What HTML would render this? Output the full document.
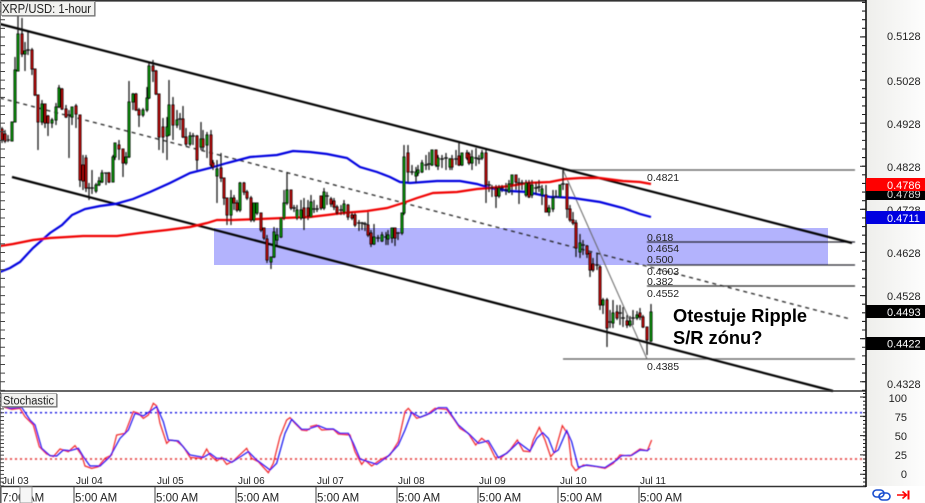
<!DOCTYPE html>
<html><head><meta charset="utf-8"><style>
html,body{margin:0;padding:0;background:#fff}
svg{display:block;font-family:"Liberation Sans",sans-serif}
</style></head><body>
<svg width="925" height="503" viewBox="0 0 925 503" xmlns="http://www.w3.org/2000/svg">
<defs>
<filter id="b" x="-2%" y="-2%" width="104%" height="104%"><feGaussianBlur stdDeviation="0.42"/></filter>
<linearGradient id="g" x1="0" x2="1" y1="0" y2="0"><stop offset="0" stop-color="#eeeeeb"/><stop offset="1" stop-color="#fdfdfd"/></linearGradient>
</defs>
<rect width="925" height="503" fill="#fff"/>
<rect x="866" y="0" width="59" height="486" fill="url(#g)"/>
<rect x="214" y="228" width="614" height="37" fill="#b3b3fd"/>

<g filter="url(#b)">
<!-- fib -->
<g fill="none" stroke="#555" stroke-width="1.3">
<path d="M563 170H855M563 359H855"/>
<path d="M647 286H855" stroke="#222"/>
<path d="M647 242H855M647 265H855" stroke="#223"/>
<path d="M563 170L647 359" stroke="#666" stroke-width="1"/>
</g>
<path d="M0 98L850 319" stroke="#222" stroke-width="1.3" stroke-dasharray="4 4" fill="none"/>
<!-- channels -->
<path d="M0 24L852 243M12 177L833 391" stroke="#000" stroke-width="2.2" fill="none"/>
<!-- MAs -->
<polyline fill="none" stroke="#0000e0" stroke-width="2.2" points="0,272 10,268 20,262 33,248 50,233 62,225 72,215 85,209 100,206 115,204 133,199 150,192 170,183 190,173 210,168 227,163 250,157 277,155 293,151 310,152 327,154 347,158 360,167 377,172 390,177 400,182 410,183 437,181 460,181 477,184 490,188 510,191 527,192 550,197 557,197 573,198 600,202 623,208 640,214 651,217"/>
<polyline fill="none" stroke="#f00000" stroke-width="2.2" points="0,246 13,244 33,240 50,238 67,237 83,236 117,236 140,233 167,230 190,227 207,223 217,220 233,220 260,219 283,218 310,217 327,215 343,213 367,211 387,208 403,203 417,198 433,193 457,192 477,189 490,188 510,186 527,183 550,182 565,179 580,178 600,178 623,181 640,182 651,184"/>
<!-- wicks -->
<path fill="none" stroke="#111" stroke-width="1.2" d="M2 127V143M5 130V143M8 135V142M7 140h3M12 122V141M15 57V122M18 5V71M22 18V57M25 42V71M28 32V55M26 50h4M32 48V75M35 69V96M38 95V150M42 100V125M45 104V128M48 115V136M52 118V128M56 103V125M59 85V108M62 88V110M66 105V118M69 110V158M67 115h4M72 107V125M76 104V128M80 115V187M83 155V190M86 155V192M89 183V200M87 188h4M92 170V194M90 188h4M96 183V193M99 177V186M102 170V183M106 173V185M104 173h4M109 172V183M113 155V182M115 143V160M119 140V160M123 149V177M126 152V165M129 81V158M133 93V110M136 93V111M139 108V127M143 108V117M147 87V112M149 63V99M153 60V82M156 70V95M159 94V150M163 118V153M167 117V160M169 80V136M173 97V140M177 110V128M180 113V130M178 119h4M183 106V138M186 128V146M190 132V146M193 133V145M191 136h4M197 135V170M201 122V150M203 130V150M207 132V158M211 130V168M213 160V170M217 160V203M221 153V182M224 178V205M227 198V225M231 190V225M234 195V210M237 200V212M240 182V212M244 182V195M247 190V200M251 196V222M254 203V222M257 203V215M261 213V232M264 228V240M267 235V263M271 257V269M274 227V258M277 228V245M281 218V238M284 190V220M287 172V205M291 190V210M294 205V212M292 208h4M297 205V220M301 200V220M304 198V230M308 200V220M311 195V217M314 200V213M312 209h4M317 205V212M315 209h4M321 196V210M324 188V210M327 192V205M325 196h4M331 197V207M334 198V210M337 205V215M341 205V215M339 210h4M344 200V215M348 204V220M352 212V220M355 213V227M359 220V231M357 223h4M362 222V230M360 223h4M365 222V231M363 224h4M368 212V237M371 230V247M374 224V245M378 235V242M376 238h4M382 232V242M386 232V245M384 237h4M388 230V245M392 228V243M395 228V246M398 232V240M396 233h4M402 213V235M404 145V215M408 145V183M412 165V175M410 172h4M416 167V183M418 165V176M422 160V173M426 155V170M424 165h4M429 152V170M427 164h4M432 150V166M436 150V167M438 155V170M442 155V168M440 159h4M446 153V170M444 158h4M450 158V170M452 155V170M456 150V165M454 159h4M459 142V166M462 153V166M467 150V160M469 152V165M472 150V170M476 148V166M474 158h4M479 155V164M477 159h4M482 150V160M486 150V203M489 181V192M487 185h4M492 185V197M490 188h4M496 185V208M499 185V198M502 185V192M500 188h4M506 183V195M504 190h4M509 180V193M512 175V195M516 175V190M519 178V204M517 183h4M522 180V190M520 183h4M526 180V197M529 180V198M532 180V198M536 182V195M534 188h4M539 180V192M537 187h4M542 185V205M546 185V212M549 205V216M553 190V212M556 190V197M554 197h4M560 185V197M563 170V190M561 184h4M567 184V218M570 205V222M573 212V225M576 220V257M580 234V258M583 240V255M581 245h4M587 245V258M590 253V277M593 258V272M597 253V270M595 265h4M600 265V310M603 298V314M607 298V347M610 310V328M608 322h4M613 300V328M617 305V320M620 305V325M618 313h4M623 307V327M621 318h4M627 315V328M630 316V327M633 310V325M631 318h4M637 311V320M640 308V320M643 315V328M647 327V355M651 304V342"/>
<!-- green bodies -->
<path fill="#0aa00a" stroke="#000" stroke-width="1" d="M11 122h2V141h-2zM14 70h2V122h-2zM17 34h2V71h-2zM24 51h2V54h-2zM41 104h2V122h-2zM51 120h2V123h-2zM55 107h2V120h-2zM58 88h2V107h-2zM71 107h2V117h-2zM95 185h2V191h-2zM98 181h2V185h-2zM101 173h2V182h-2zM112 157h2V182h-2zM114 143h2V157h-2zM125 157h2V163h-2zM128 102h2V157h-2zM132 94h2V102h-2zM142 110h2V115h-2zM146 98h2V110h-2zM148 66h2V98h-2zM166 127h2V136h-2zM168 105h2V135h-2zM176 120h2V125h-2zM189 136h2V144h-2zM200 139h2V147h-2zM206 135h2V145h-2zM216 169h2V176h-2zM230 198h2V215h-2zM239 183h2V210h-2zM253 203h2V220h-2zM256 203h2V213h-2zM270 257h2V262h-2zM273 232h2V257h-2zM276 235h2V240h-2zM280 218h2V237h-2zM283 203h2V218h-2zM286 190h2V203h-2zM296 210h2V218h-2zM300 210h2V218h-2zM310 202h2V217h-2zM323 192h2V208h-2zM343 204h2V212h-2zM373 237h2V244h-2zM381 235h2V241h-2zM387 235h2V239h-2zM391 228h2V238h-2zM401 213h2V233h-2zM403 157h2V213h-2zM415 172h2V176h-2zM417 170h2V173h-2zM421 163h2V172h-2zM431 150h2V165h-2zM437 158h2V166h-2zM449 159h2V167h-2zM461 153h2V165h-2zM471 157h2V163h-2zM481 153h2V158h-2zM498 188h2V196h-2zM508 184h2V192h-2zM511 175h2V184h-2zM525 183h2V195h-2zM531 185h2V195h-2zM541 189h2V195h-2zM548 208h2V212h-2zM552 198h2V209h-2zM559 185h2V197h-2zM579 243h2V252h-2zM602 300h2V305h-2zM612 313h2V323h-2zM629 321h2V325h-2zM636 315h2V318h-2zM650 312h2V341h-2z"/>
<!-- red bodies -->
<path fill="#cc0a0a" stroke="#000" stroke-width="1" d="M1 129h2V140h-2zM4 134h2V141h-2zM21 34h2V54h-2zM31 50h2V69h-2zM34 69h2V95h-2zM37 95h2V122h-2zM44 104h2V123h-2zM47 116h2V123h-2zM61 89h2V109h-2zM65 109h2V117h-2zM75 106h2V114h-2zM79 115h2V180h-2zM82 165h2V181h-2zM85 158h2V188h-2zM108 173h2V182h-2zM118 145h2V149h-2zM122 149h2V163h-2zM135 94h2V110h-2zM138 110h2V115h-2zM152 66h2V71h-2zM155 71h2V94h-2zM158 94h2V137h-2zM162 127h2V137h-2zM172 105h2V125h-2zM182 119h2V137h-2zM185 137h2V144h-2zM196 136h2V160h-2zM202 139h2V147h-2zM210 135h2V165h-2zM212 163h2V167h-2zM220 168h2V178h-2zM223 178h2V198h-2zM226 198h2V215h-2zM233 198h2V203h-2zM236 203h2V210h-2zM243 183h2V192h-2zM246 192h2V198h-2zM250 198h2V220h-2zM260 213h2V230h-2zM263 228h2V238h-2zM266 239h2V260h-2zM290 190h2V208h-2zM303 208h2V218h-2zM307 208h2V216h-2zM320 196h2V208h-2zM330 199h2V204h-2zM333 201h2V207h-2zM336 207h2V213h-2zM347 205h2V217h-2zM351 215h2V218h-2zM354 215h2V225h-2zM367 225h2V235h-2zM370 233h2V244h-2zM394 228h2V238h-2zM407 153h2V172h-2zM435 150h2V165h-2zM451 159h2V167h-2zM458 156h2V165h-2zM466 153h2V158h-2zM468 154h2V163h-2zM485 153h2V185h-2zM495 188h2V196h-2zM515 175h2V182h-2zM528 183h2V197h-2zM545 195h2V212h-2zM566 184h2V209h-2zM569 209h2V220h-2zM572 220h2V223h-2zM575 223h2V248h-2zM586 246h2V254h-2zM589 253h2V270h-2zM592 264h2V270h-2zM599 267h2V305h-2zM606 300h2V328h-2zM616 312h2V318h-2zM626 321h2V325h-2zM639 313h2V317h-2zM642 317h2V327h-2zM646 327h2V340h-2z"/>
<!-- stochastic -->
<path d="M0 412.7H866" stroke="#0000e0" stroke-width="1.4" stroke-dasharray="2 3"/>
<path d="M0 459H866" stroke="#e02020" stroke-width="1.4" stroke-dasharray="2 3"/>
<g transform="translate(0,380) scale(.33333)" fill="none" stroke-width="3.6">
<polyline stroke="#f02020" points="0,70 15,82 35,88 60,85 75,110 100,135 118,200 140,222 160,230 180,207 205,215 225,197 245,225 255,258 275,265 295,260 315,235 335,225 350,165 375,160 400,95 415,100 430,115 445,105 460,70 470,78 480,130 500,190 510,180 530,183 550,200 570,232 605,235 620,207 630,225 650,243 665,232 680,253 700,243 740,205 755,235 775,245 805,278 820,250 840,170 860,120 870,113 885,130 905,150 920,152 930,145"/>
<polyline stroke="#1010f0" points="0,72 30,85 65,82 90,120 105,135 125,205 150,227 170,228 190,210 210,212 235,205 250,230 270,258 300,258 330,230 360,175 385,150 405,100 430,108 470,80 490,125 505,180 535,183 570,225 610,232 630,220 650,235 670,235 695,247 745,215 770,240 810,270 830,250 855,160 875,118 905,148 930,148"/>
</g>
<g transform="translate(310,380) scale(.33333)" fill="none" stroke-width="3.6">
<polyline stroke="#f02020" points="0,140 20,135 35,150 70,148 85,162 120,165 135,215 155,253 165,240 185,258 210,240 240,225 265,185 285,95 295,85 320,115 350,105 375,85 410,88 430,115 450,145 475,160 497,195 515,175 535,190 555,232 575,232 600,210 622,180 640,213 660,215 670,180 688,142 705,180 722,230 735,215 757,137 775,165 785,255 797,272 820,255 860,260 885,265 910,250 930,225 960,228 990,207 1012,212 1025,180"/>
<polyline stroke="#1010f0" points="0,145 25,137 50,147 70,147 90,160 115,160 130,190 150,237 175,245 200,253 235,228 265,195 285,150 305,97 330,112 360,100 385,83 410,83 445,135 480,165 505,190 535,182 565,233 590,220 625,187 660,213 680,175 698,158 715,175 732,218 745,210 770,152 785,185 805,262 830,255 885,263 920,240 935,227 965,226 990,210 1012,212 1020,205"/>
</g>
</g>

<!-- frame -->
<path d="M0 .8H866M0 391H866M0 486.5H866" stroke="#333" stroke-width="1.6" fill="none"/>
<path d="M866 0V487" stroke="#111" stroke-width="1.6"/>
<path d="M.5 0V503" stroke="#777" stroke-width="1"/>
<!-- ticks -->
<g fill="none" stroke="#222">
<path d="M864 1.9V391" stroke-width="4" stroke-dasharray="1.1 7.52"/>
<path d="M863 36.4V391" stroke-width="6" stroke-dasharray="1.1 42"/>
<path d="M2.5 1V391" stroke-width="5" stroke-dasharray="1 7.62" stroke-dashoffset="-1" stroke="#444"/>
<path d="M864.5 393V486" stroke-width="3" stroke-dasharray="1 2.85"/>
<path d="M863 396.5V486" stroke-width="6" stroke-dasharray="1 18.3"/>
<path d="M2 393V486" stroke-width="4" stroke-dasharray="1 2.85" stroke="#444"/>
</g>
<!-- time separators -->
<path d="M74 487V503M155 487V503M236 487V503M316 487V503M397 487V503M478 487V503M558 487V503M639 487V503M1 487V503" stroke="#444" stroke-width="1"/>

<!-- title boxes -->
<rect x="1.5" y="1.5" width="93" height="14" fill="#f2f2f0" stroke="#aaa"/>
<path d="M95 2V16H2" stroke="#666" fill="none"/>
<text x="2" y="13" font-size="12.5" fill="#222" textLength="89" lengthAdjust="spacingAndGlyphs">XRP/USD: 1-hour</text>
<rect x="1.5" y="393.5" width="55" height="13" fill="#f2f2f0" stroke="#aaa"/>
<path d="M57 394V407H2" stroke="#666" fill="none"/>
<text x="3" y="404.5" font-size="11.5" fill="#222" textLength="51" lengthAdjust="spacingAndGlyphs">Stochastic</text>

<!-- fib labels -->
<g font-size="10.5" fill="#222">
<text x="647" y="181">0.4821</text>
<text x="647" y="241">0.618</text>
<text x="647" y="252">0.4654</text>
<text x="647" y="263">0.500</text>
<text x="647" y="275">0.4603</text>
<text x="647" y="285">0.382</text>
<text x="647" y="297">0.4552</text>
<text x="647" y="370">0.4385</text>
</g>
<text font-size="18.3" font-weight="700" fill="#000"><tspan x="673" y="322">Otestuje Ripple</tspan><tspan x="673" y="344">S/R zónu?</tspan></text>

<!-- right axis -->
<g font-size="11" fill="#222">
<text x="887" y="40">0.5128</text>
<text x="887" y="85">0.5028</text>
<text x="887" y="128">0.4928</text>
<text x="887" y="171">0.4828</text>
<text x="887" y="214">0.4728</text>
<text x="887" y="257">0.4628</text>
<text x="887" y="300">0.4528</text>
<text x="887" y="388">0.4328</text>
</g>
<g font-size="11">
<rect x="866" y="187" width="59" height="13" fill="#000"/><text x="887" y="198" fill="#ddd">0.4789</text>
<rect x="866" y="178" width="59" height="13" fill="#f00"/><text x="887" y="189" fill="#fff">0.4786</text>
<rect x="866" y="211" width="59" height="13" fill="#0000e0"/><text x="887" y="222" fill="#fff">0.4711</text>
<rect x="866" y="305" width="59" height="13" fill="#000"/><text x="887" y="316" fill="#fff">0.4493</text>
<rect x="866" y="337" width="59" height="13" fill="#000"/><text x="887" y="347.5" fill="#fff">0.4422</text>
</g>
<g font-size="11" fill="#222" text-anchor="end">
<text x="907" y="402">100</text>
<text x="907" y="421">75</text>
<text x="907" y="440">50</text>
<text x="907" y="459">25</text>
<text x="907" y="478">0</text>
</g>

<!-- x axis -->
<g font-size="10" fill="#222">
<text x="2" y="484">Jul 03</text><text x="76" y="484">Jul 04</text><text x="157" y="484">Jul 05</text><text x="238" y="484">Jul 06</text><text x="317" y="484">Jul 07</text><text x="398" y="484">Jul 08</text><text x="479" y="484">Jul 09</text><text x="560" y="484">Jul 10</text><text x="640" y="484">Jul 11</text>
</g>
<g font-size="11.5" fill="#222">
<text x="2" y="501.5">7:00 AM</text><text x="75" y="501.5">5:00 AM</text><text x="156" y="501.5">5:00 AM</text><text x="237" y="501.5">5:00 AM</text><text x="317" y="501.5">5:00 AM</text><text x="398" y="501.5">5:00 AM</text><text x="479" y="501.5">5:00 AM</text><text x="560" y="501.5">5:00 AM</text><text x="640" y="501.5">5:00 AM</text>
</g>
<rect x="20" y="487" width="12" height="16" fill="#f6f6f6" stroke="#999"/>

<!-- icons -->
<g fill="none" stroke="#1a4fd0" stroke-width="1.6">
<rect x="873" y="490" width="11" height="7" rx="3.5"/>
<rect x="879" y="493" width="11" height="7" rx="3.5"/>
</g>
<path d="M897 495H906M902.5 491.5L906.5 495L902.5 498.5" fill="none" stroke="#f00" stroke-width="1.6"/>
<path d="M908.5 490.5V499.5" stroke="#f00" stroke-width="2"/>
</svg>
</body></html>
